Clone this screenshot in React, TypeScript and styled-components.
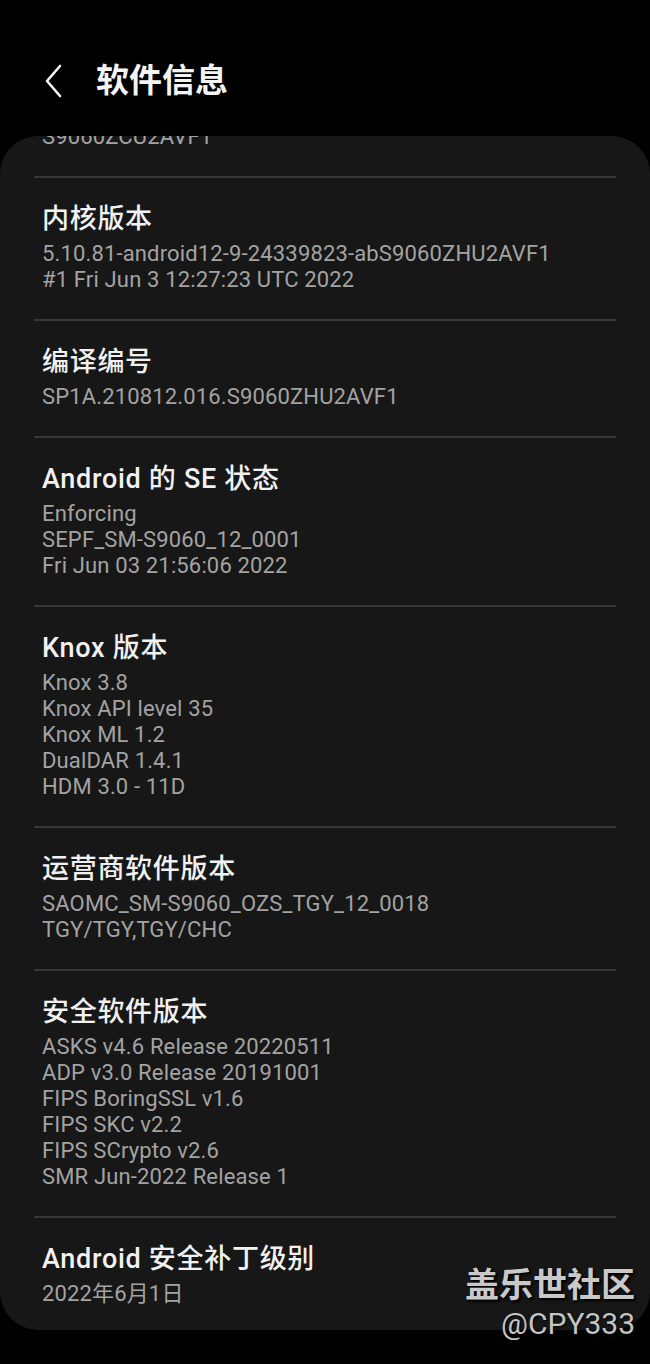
import React from "react";
import styled, { createGlobalStyle } from "styled-components";

const Global = createGlobalStyle`
  html, body { margin: 0; padding: 0; background: #000; }
  body { font-family: Roboto, "Noto Sans CJK SC", sans-serif; }
`;

const Page = styled.div`
  width: 650px;
  height: 1364px;
  background: #000;
  position: relative;
  overflow: hidden;
`;

const Header = styled.header`
  height: 136px;
  display: flex;
  align-items: flex-start;
  padding: 62px 0 0 42px;
  box-sizing: border-box;
  gap: 30px;
`;

const BackButton = styled.div`
  width: 24px;
  height: 38px;
  display: flex;
  align-items: center;
  justify-content: center;
`;

const Title = styled.h1`
  margin: 0;
  font-family: Roboto, "Noto Sans CJK SC", sans-serif;
  font-weight: 700;
  font-size: 33px;
  line-height: 38px;
  color: #f4f4f4;
`;

const Card = styled.main`
  background: #171717;
  border-radius: 38px;
  overflow: hidden;
  height: 1194px;
  box-sizing: border-box;
`;

const Section = styled.section<{ $last?: boolean }>`
  margin: 0 34px;
  padding: 24px 8px ${(p) => (p.$last ? "25px" : "26px")};
  border-top: 2px solid #383838;
`;

const Clipped = styled.div`
  margin: -12px 42px 0;
  padding-bottom: 26px;
`;

const ItemTitle = styled.div`
  font-family: Roboto, "Noto Sans CJK SC", sans-serif;
  font-size: 27px;
  letter-spacing: 0.7px;
  line-height: 34px;
  font-weight: 500;
  color: #f1f1f1;
  margin-bottom: 5px;
`;

const Line = styled.div`
  font-family: Roboto, "Noto Sans CJK SC", sans-serif;
  font-size: 22px;
  letter-spacing: 0.15px;
  line-height: 26px;
  color: #a3a3a3;
  white-space: nowrap;
`;

const Watermark = styled.div`
  position: absolute;
  right: 15px;
  bottom: 24px;
  display: flex;
  flex-direction: column;
  align-items: flex-end;
  gap: 6px;
  pointer-events: none;
`;

const WmMain = styled.div`
  font-family: "Noto Sans CJK SC", sans-serif;
  font-weight: 700;
  font-size: 34px;
  line-height: 38px;
  color: #c9c9c9;
  text-shadow: 1px 1px 2px #000, 2px 2px 3px rgba(0, 0, 0, 0.8);
`;

const WmSub = styled.div`
  font-family: Roboto, sans-serif;
  font-size: 30px;
  line-height: 32px;
  color: #c4c4c4;
  text-shadow: 1px 1px 2px #000;
`;

const sections: { title: string; lines: string[] }[] = [
  {
    title: "内核版本",
    lines: [
      "5.10.81-android12-9-24339823-abS9060ZHU2AVF1",
      "#1 Fri Jun 3 12:27:23 UTC 2022",
    ],
  },
  { title: "编译编号", lines: ["SP1A.210812.016.S9060ZHU2AVF1"] },
  {
    title: "Android 的 SE 状态",
    lines: ["Enforcing", "SEPF_SM-S9060_12_0001", "Fri Jun 03 21:56:06 2022"],
  },
  {
    title: "Knox 版本",
    lines: ["Knox 3.8", "Knox API level 35", "Knox ML 1.2", "DualDAR 1.4.1", "HDM 3.0 - 11D"],
  },
  {
    title: "运营商软件版本",
    lines: ["SAOMC_SM-S9060_OZS_TGY_12_0018", "TGY/TGY,TGY/CHC"],
  },
  {
    title: "安全软件版本",
    lines: [
      "ASKS v4.6 Release 20220511",
      "ADP v3.0 Release 20191001",
      "FIPS BoringSSL v1.6",
      "FIPS SKC v2.2",
      "FIPS SCrypto v2.6",
      "SMR Jun-2022 Release 1",
    ],
  },
  { title: "Android 安全补丁级别", lines: ["2022年6月1日"] },
];

export default function App() {
  return (
    <Page>
      <Global />
      <Header>
        <BackButton>
          <svg width="20" height="34" viewBox="0 0 20 34" fill="none">
            <path d="M16 2 L3 17 L16 32" stroke="#f4f4f4" strokeWidth="2.6" strokeLinecap="round" strokeLinejoin="round" />
          </svg>
        </BackButton>
        <Title>软件信息</Title>
      </Header>
      <Card>
        <Clipped>
          <Line>S9060ZCU2AVF1</Line>
        </Clipped>
        {sections.map((s, i) => (
          <Section key={s.title} $last={i === sections.length - 1}>
            <ItemTitle>{s.title}</ItemTitle>
            {s.lines.map((l) => (
              <Line key={l}>{l}</Line>
            ))}
          </Section>
        ))}
      </Card>
      <Watermark>
        <WmMain>盖乐世社区</WmMain>
        <WmSub>@CPY333</WmSub>
      </Watermark>
    </Page>
  );
}
